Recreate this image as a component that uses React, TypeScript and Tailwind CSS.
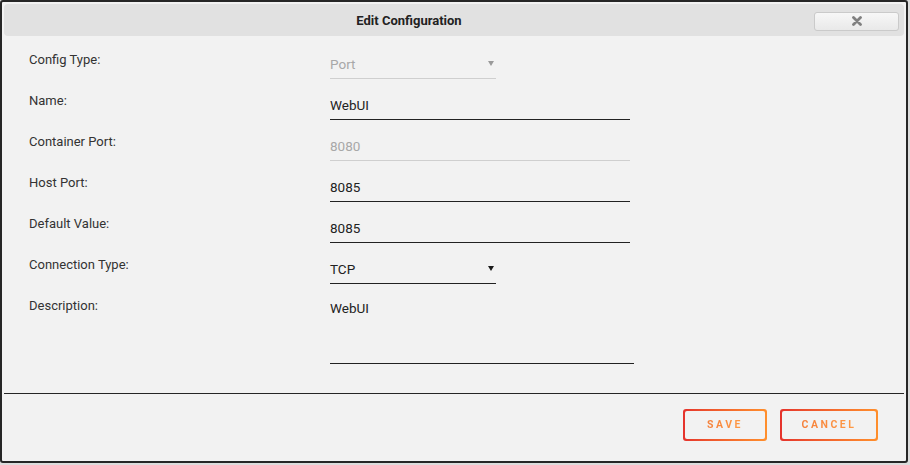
import React from 'react';

type Field = {
  label: string;
  value: string;
  kind: 'text' | 'select' | 'area';
  disabled?: boolean;
  width: string;
};

const fields: Field[] = [
  { label: 'Config Type:', value: 'Port', kind: 'select', disabled: true, width: 'w-[166px]' },
  { label: 'Name:', value: 'WebUI', kind: 'text', width: 'w-[300px]' },
  { label: 'Container Port:', value: '8080', kind: 'text', disabled: true, width: 'w-[300px]' },
  { label: 'Host Port:', value: '8085', kind: 'text', width: 'w-[300px]' },
  { label: 'Default Value:', value: '8085', kind: 'text', width: 'w-[300px]' },
  { label: 'Connection Type:', value: 'TCP', kind: 'select', width: 'w-[166px]' },
  { label: 'Description:', value: 'WebUI', kind: 'area', width: 'w-[304px]' },
];

function Caret({ disabled }: { disabled?: boolean }) {
  return (
    <svg width="6" height="7" viewBox="0 0 6 7" className="mr-[2px] mt-[3px]">
      <path d="M0 1 H6 L3 6 Z" fill={disabled ? '#9a9a9a' : '#1a1a1a'} />
    </svg>
  );
}

function FieldRow({ label, value, kind, disabled, width }: Field) {
  const line = disabled ? 'border-[#cfcfcf]' : 'border-[#222]';
  const color = disabled ? 'text-[#a8a8a8]' : 'text-[#222]';
  return (
    <div className={`flex ${kind === 'area' ? '' : 'h-[41px]'}`}>
      <div className="w-[328px] pl-[27px] text-[13px] leading-[14px] text-[#333]">{label}</div>
      <div
        className={`${width} flex justify-between border-b ${line} ${
          kind === 'area' ? 'mt-[2px] h-[63px] items-start' : 'mt-[4px] h-[22px] items-start'
        }`}
      >
        <span className={`text-[13.5px] leading-[14px] ${color}`}>{value}</span>
        {kind === 'select' && <Caret disabled={disabled} />}
      </div>
    </div>
  );
}

function GradientButton({ label, width }: { label: string; width: string }) {
  return (
    <div className={`${width} h-[32px] rounded-[3px] bg-linear-to-r from-[#e5322c] to-[#ff8f2c] p-[2px]`}>
      <div className="flex h-full w-full items-center justify-center rounded-[2px] bg-[#f2f2f2]">
        <span className="bg-linear-to-r from-[#f5803a] to-[#ff9a44] bg-clip-text text-[10.5px] font-bold tracking-[2.5px] text-transparent">
          {label}
        </span>
      </div>
    </div>
  );
}

export default function App() {
  return (
    <div
      className="flex h-[465px] w-[910px] bg-[#dcdcdc]"
      style={{ fontFamily: 'Roboto, "Liberation Sans", sans-serif' }}
    >
      <div className="flex h-[463px] w-[908px] flex-col rounded-[3px] border-2 border-[#262626] bg-[#f2f2f2]">
        <div className="mx-[2px] mt-[2px] flex h-[32px] items-center rounded-[4px] bg-[#e1e1e1] pt-[2px]">
          <div className="w-[810px] text-center text-[13px] font-bold text-[#222]">Edit Configuration</div>
          <button className="flex h-[19px] w-[85px] items-center justify-center rounded-[3px] border border-[#cacaca] bg-linear-to-b from-[#f7f7f7] to-[#e9e9e9]">
            <svg width="10" height="10" viewBox="0 0 10 10">
              <path d="M1.5 1.5 L8.5 8.5 M8.5 1.5 L1.5 8.5" stroke="#808080" strokeWidth="2.8" strokeLinecap="round" />
            </svg>
          </button>
        </div>

        <div className="flex flex-col pt-[17px]">
          {fields.map((f) => (
            <FieldRow key={f.label} {...f} />
          ))}
        </div>

        <div className="mx-[2px] mt-[29px] border-t border-[#262626]" />

        <div className="flex justify-end gap-[13px] pr-[28px] pt-[15px]">
          <GradientButton label="SAVE" width="w-[84px]" />
          <GradientButton label="CANCEL" width="w-[98px]" />
        </div>
      </div>
    </div>
  );
}
